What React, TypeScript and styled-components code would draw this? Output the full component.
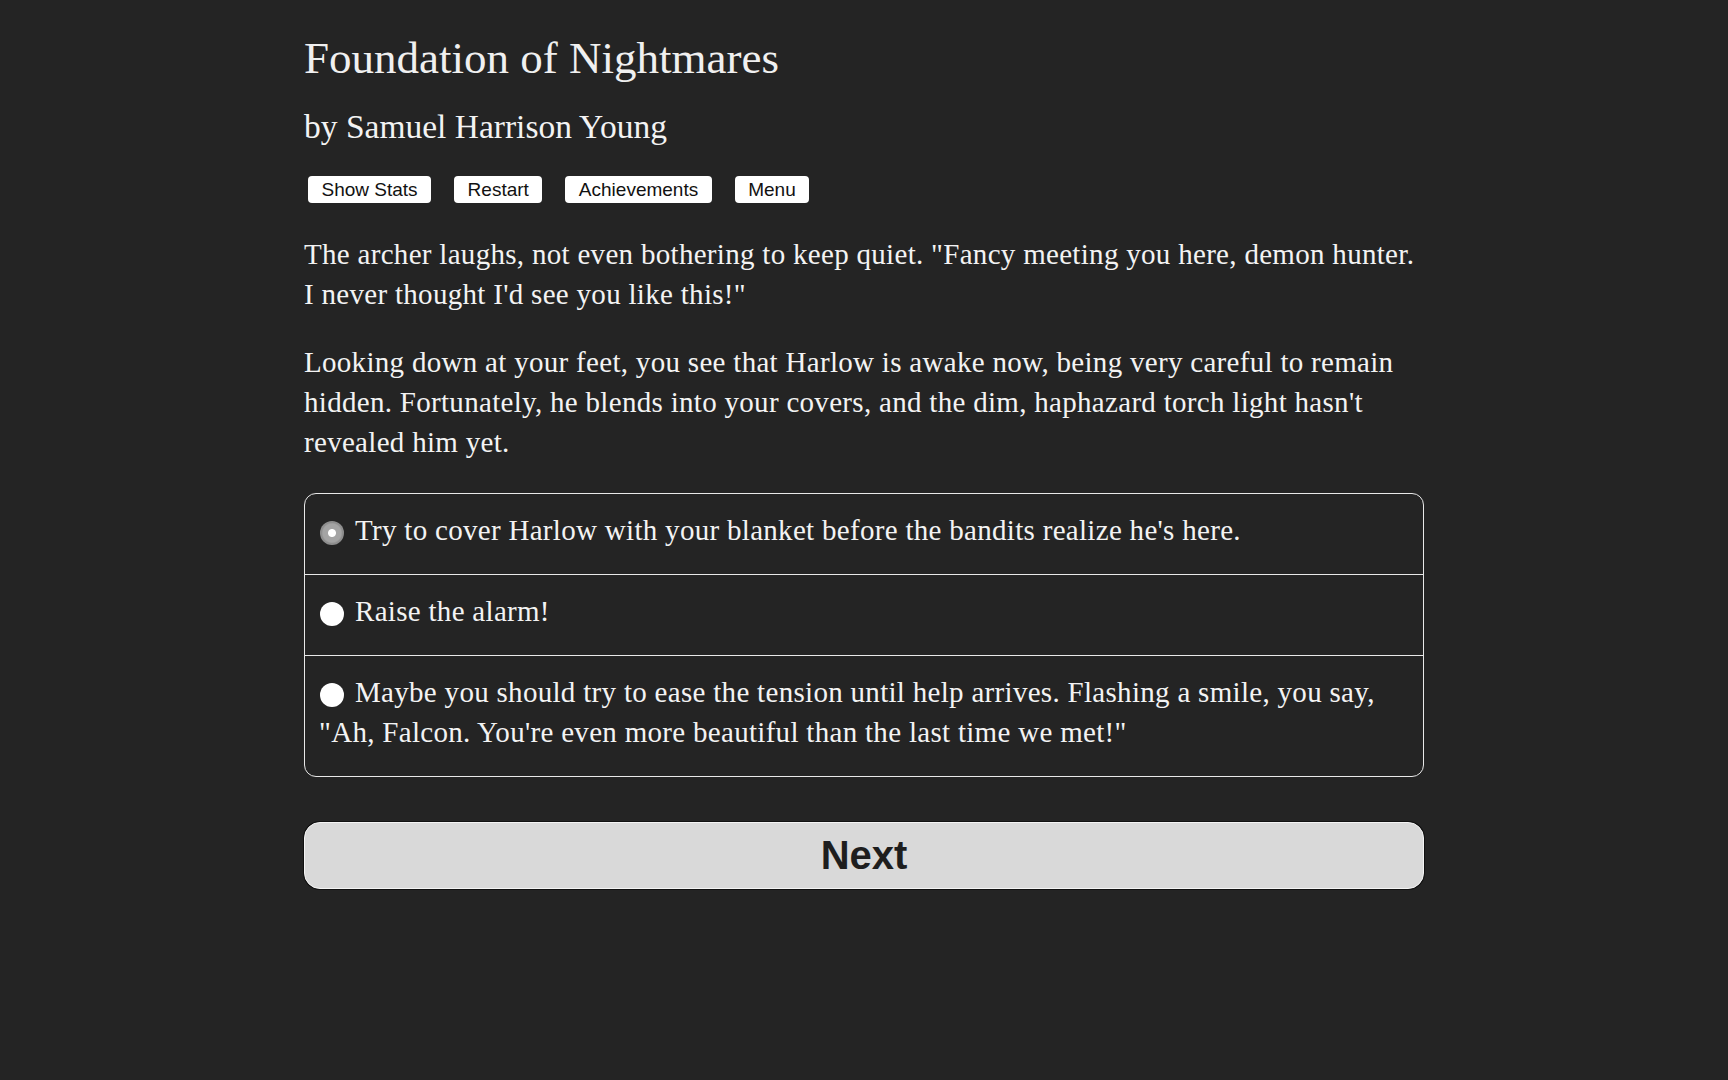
import React, { useState } from "react";
import styled, { createGlobalStyle } from "styled-components";

const Global = createGlobalStyle`
  html, body {
    margin: 0;
    padding: 0;
    background: #242424;
  }
  body {
    min-height: 1080px;
    font-family: "Liberation Serif", "Times New Roman", serif;
    color: #f3f3f3;
  }
`;

const Page = styled.main`
  width: 1120px;
  margin: 0 auto;
  padding-top: 31px;
  box-sizing: border-box;
`;

const Title = styled.h1`
  margin: 0;
  font-size: 45px;
  line-height: 54px;
  font-weight: normal;
  color: #f0f0f0;
`;

const Author = styled.h2`
  margin: 22px 0 0;
  font-size: 33.5px;
  line-height: 40px;
  font-weight: normal;
  color: #f3f3f3;
`;

const Toolbar = styled.nav`
  display: flex;
  gap: 23px;
  margin-top: 29px;
  padding-left: 4px;
`;

const ToolButton = styled.button`
  height: 27px;
  padding: 0 13.5px;
  border: none;
  border-radius: 4px;
  background: #ffffff;
  color: #111;
  font-family: "Liberation Sans", Arial, sans-serif;
  font-size: 19px;
  line-height: 27px;
  cursor: pointer;
`;

const Paragraph = styled.p<{ $first?: boolean }>`
  margin: ${(p) => (p.$first ? "31px" : "28px")} 0 0;
  font-size: 29px;
  line-height: 40px;
  letter-spacing: 0.3px;
`;

const ChoiceBox = styled.fieldset`
  margin: 31px 0 0;
  padding: 0;
  border: 1px solid #e8e8e8;
  border-radius: 12px;
  overflow: hidden;
`;

const ChoiceRow = styled.label<{ $last?: boolean }>`
  display: block;
  padding: 16px 14px 24px;
  font-size: 29px;
  line-height: 40px;
  letter-spacing: 0.3px;
  border-bottom: ${(p) => (p.$last ? "none" : "1px solid #e8e8e8")};
  cursor: pointer;
`;

const Radio = styled.span<{ $checked?: boolean }>`
  display: inline-block;
  width: 24px;
  height: 24px;
  margin: 0 11px 0 1px;
  border-radius: 50%;
  vertical-align: -5px;
  box-sizing: border-box;
  background: ${(p) =>
    p.$checked
      ? "radial-gradient(circle, #ffffff 0 3.5px, #a4a4a4 4.5px 9px, #8e8e8e 10.5px)"
      : "#ffffff"};
`;

const NextButton = styled.button`
  display: block;
  width: 100%;
  height: 67px;
  margin-top: 45px;
  border: 1px solid #f4f4f4;
  box-shadow: 0 0 0 1px #111;
  border-radius: 16px;
  background: #d9d9d9;
  color: #1e1e1e;
  font-family: "Liberation Sans", Arial, sans-serif;
  font-weight: bold;
  font-size: 40px;
  cursor: pointer;
`;

const choices = [
  "Try to cover Harlow with your blanket before the bandits realize he's here.",
  "Raise the alarm!",
  "Maybe you should try to ease the tension until help arrives. Flashing a smile, you say, \"Ah, Falcon. You're even more beautiful than the last time we met!\"",
];

export default function App() {
  const [selected, setSelected] = useState(0);
  return (
    <>
      <Global />
      <Page>
        <Title>Foundation of Nightmares</Title>
        <Author>by Samuel Harrison Young</Author>
        <Toolbar>
          <ToolButton>Show Stats</ToolButton>
          <ToolButton>Restart</ToolButton>
          <ToolButton>Achievements</ToolButton>
          <ToolButton>Menu</ToolButton>
        </Toolbar>
        <Paragraph $first>
          The archer laughs, not even bothering to keep quiet. "Fancy meeting you here, demon hunter. I never thought I'd see you like this!"
        </Paragraph>
        <Paragraph>
          Looking down at your feet, you see that Harlow is awake now, being very careful to remain hidden. Fortunately, he blends into your covers, and the dim, haphazard torch light hasn't revealed him yet.
        </Paragraph>
        <ChoiceBox>
          {choices.map((c, i) => (
            <ChoiceRow key={i} $last={i === choices.length - 1} onClick={() => setSelected(i)}>
              <Radio $checked={selected === i} />
              {c}
            </ChoiceRow>
          ))}
        </ChoiceBox>
        <NextButton>Next</NextButton>
      </Page>
    </>
  );
}
